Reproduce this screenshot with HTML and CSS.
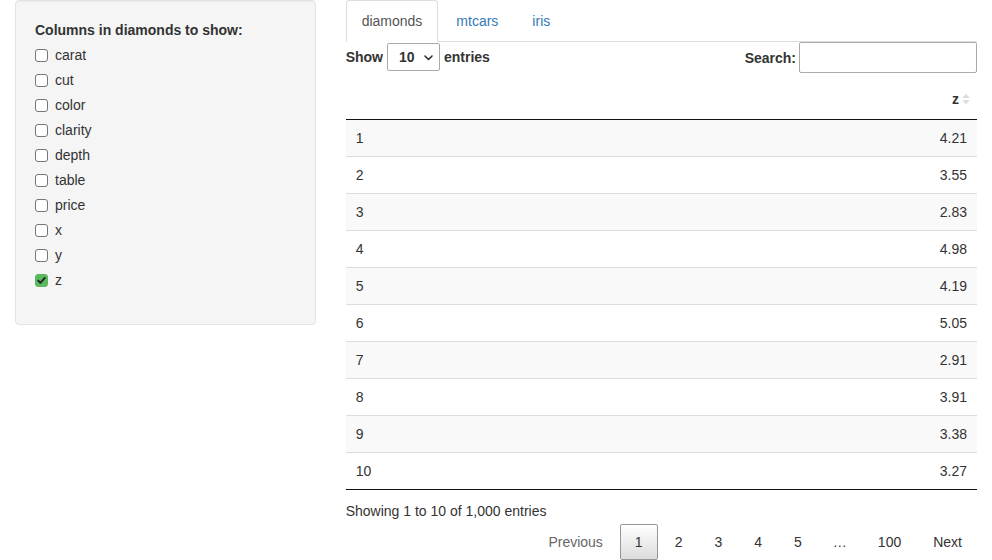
FILE: index.html
```html
<!DOCTYPE html>
<html>
<head>
<meta charset="utf-8">
<link rel="stylesheet" href="styles.css">
</head>
<body>
<div class="page">
  <aside class="well">
    <div class="group-label">Columns in diamonds to show:</div>
    <div class="options">
      <label class="check"><span class="box"></span>carat</label>
      <label class="check"><span class="box"></span>cut</label>
      <label class="check"><span class="box"></span>color</label>
      <label class="check"><span class="box"></span>clarity</label>
      <label class="check"><span class="box"></span>depth</label>
      <label class="check"><span class="box"></span>table</label>
      <label class="check"><span class="box"></span>price</label>
      <label class="check"><span class="box"></span>x</label>
      <label class="check"><span class="box"></span>y</label>
      <label class="check"><span class="box checked"><svg width="13" height="13" viewBox="0 0 13 13"><path d="M3.2 6.6 L5.4 8.9 L9.8 3.9" fill="none" stroke="#222" stroke-width="1.9" stroke-linecap="round" stroke-linejoin="round"/></svg></span>z</label>
    </div>
  </aside>
  <main class="main">
    <ul class="tabs">
      <li class="tab active"><a>diamonds</a></li>
      <li class="tab"><a>mtcars</a></li>
      <li class="tab"><a>iris</a></li>
    </ul>
    <div class="dt">
      <div class="controls">
        <div class="length">Show
          <span class="select-wrap"><span class="select">10</span><svg class="chev" width="9" height="6" viewBox="0 0 9 6"><path d="M1 1 L4.5 4.5 L8 1" fill="none" stroke="#333" stroke-width="1.6" stroke-linecap="round" stroke-linejoin="round"/></svg></span>
          entries</div>
        <div class="filter">Search:<span class="search"></span></div>
      </div>
      <table class="table">
        <thead>
          <tr><th class="idx"></th><th class="num">z<svg class="sort" width="8" height="12" viewBox="0 0 8 12"><path d="M4 0.5 L7.5 5 L0.5 5 Z" fill="#dcdcdc"/><path d="M4 11.5 L7.5 7 L0.5 7 Z" fill="#dcdcdc"/></svg></th></tr>
        </thead>
        <tbody>
          <tr class="odd"><td>1</td><td class="num">4.21</td></tr>
          <tr><td>2</td><td class="num">3.55</td></tr>
          <tr class="odd"><td>3</td><td class="num">2.83</td></tr>
          <tr><td>4</td><td class="num">4.98</td></tr>
          <tr class="odd"><td>5</td><td class="num">4.19</td></tr>
          <tr><td>6</td><td class="num">5.05</td></tr>
          <tr class="odd"><td>7</td><td class="num">2.91</td></tr>
          <tr><td>8</td><td class="num">3.91</td></tr>
          <tr class="odd"><td>9</td><td class="num">3.38</td></tr>
          <tr><td>10</td><td class="num">3.27</td></tr>
        </tbody>
      </table>
      <div class="info">Showing 1 to 10 of 1,000 entries</div>
      <div class="paginate">
        <span class="pbtn disabled">Previous</span>
        <span class="pbtn current">1</span>
        <span class="pbtn">2</span>
        <span class="pbtn">3</span>
        <span class="pbtn">4</span>
        <span class="pbtn">5</span>
        <span class="ellipsis">…</span>
        <span class="pbtn">100</span>
        <span class="pbtn">Next</span>
      </div>
    </div>
  </main>
</div>
</body>
</html>
```
FILE: styles.css
```css
* { box-sizing: border-box; }
html, body { margin: 0; padding: 0; background: #fff; }
body {
  font-family: "Liberation Sans", Arial, sans-serif;
  font-size: 14px;
  line-height: 20px;
  color: #333;
}
.page {
  display: grid;
  grid-template-columns: calc((100% + 30px) / 3 - 30px) 1fr;
  column-gap: 30px;
  padding: 0 15px;
  align-items: start;
}
.well {
  background: #f5f5f5;
  border: 1px solid #e3e3e3;
  border-radius: 4px;
  box-shadow: inset 0 1px 1px rgba(0,0,0,.05);
  padding: 19px;
}
.group-label { font-weight: bold; margin-bottom: 5px; }
.options { display: flex; flex-direction: column; gap: 5px; margin-bottom: 15px; }
.check { display: flex; align-items: center; height: 20px; }
.box {
  width: 13px; height: 13px;
  border: 1px solid #767676;
  border-radius: 3px;
  background: #fff;
  margin-right: 7px;
  margin-top: 1px;
  display: inline-flex;
}
.box.checked { background: #5cb85c; border-color: #5cb85c; position: relative; }
.box.checked svg { position: absolute; left: -1px; top: -1px; }

.tabs {
  list-style: none; margin: 0; padding: 0;
  display: flex;
  border-bottom: 1px solid #ddd;
}
.tab { margin-bottom: -1px; margin-right: 2px; }
.tab a {
  display: block;
  padding: 10px 15px;
  border: 1px solid transparent;
  border-radius: 4px 4px 0 0;
  color: #337ab7;
}
.tab.active a { color: #555; background: #fff; border-color: #ddd #ddd transparent; }

.controls { display: flex; justify-content: space-between; align-items: flex-start; }
.length, .filter { font-weight: bold; display: flex; align-items: center; }
.length { height: 30px; }
.select-wrap {
  position: relative;
  display: inline-block;
  margin: 0 4px;
}
.select {
  display: block;
  width: 53px; height: 28px;
  border: 1px solid #aaa;
  border-radius: 2px;
  padding: 3px 0 0 11px;
  font-weight: bold;
  background: #fff;
}
.chev { position: absolute; right: 7px; top: 12px; }
.filter { height: 31px; }
.search {
  display: block;
  width: 178px; height: 31px;
  border: 1px solid #aaa;
  border-radius: 2px;
  margin-left: 3px;
  background: #fff;
}

.table {
  width: 100%;
  border-collapse: separate;
  border-spacing: 0;
  margin-top: 6px;
}
.table th {
  font-weight: bold;
  padding: 10px 18px 10px 10px;
  border-bottom: 1px solid #111;
  text-align: left;
  position: relative;
}
.table th.num { text-align: right; }
.sort { position: absolute; right: 7px; top: 14px; }
.table td { padding: 8px 10px; border-top: 1px solid #ddd; }
.table tbody tr:first-child td { border-top: none; }
.table tbody tr:last-child td { border-bottom: 1px solid #111; }
.table td.num { text-align: right; }
.table tr.odd td { background: #f9f9f9; }

.info { padding-top: 11px; }
.paginate {
  display: flex;
  justify-content: flex-end;
  align-items: center;
  padding-top: 3px;
}
.pbtn {
  padding: 7px 14px;
  border: 1px solid transparent;
  border-radius: 2px;
  margin-left: 2px;
  min-width: 21px;
  text-align: center;
  color: #333;
}
.pbtn.disabled { color: #666; }
.pbtn.current {
  border-color: #979797;
  background: linear-gradient(to bottom, #fff 0%, #dcdcdc 100%);
}
.ellipsis { padding: 0 14px; margin-left: 2px; color: #333; }
```
